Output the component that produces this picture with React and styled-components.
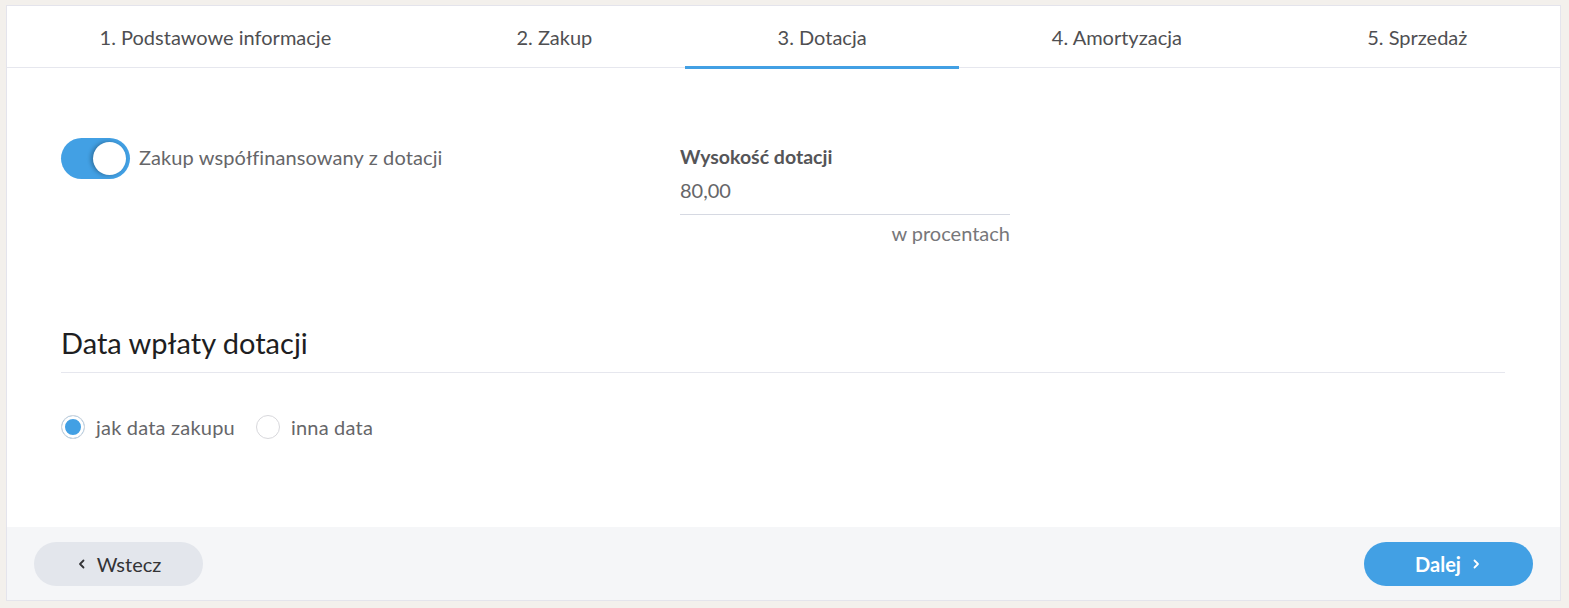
import React, { useState } from 'react';
import styled, { createGlobalStyle } from 'styled-components';

const GlobalStyle = createGlobalStyle`
    html, body {
        margin: 0;
        background: #f3f0ec;
    }
    body {
        padding: 5px 8px 7px 6px;
        font-family: Lato, "Open Sans", sans-serif;
    }
`;

const tabs = ['1. Podstawowe informacje', '2. Zakup', '3. Dotacja', '4. Amortyzacja', '5. Sprzedaż'];

function App() {
    const [active] = useState(2);
    const [financed, setFinanced] = useState(true);
    const [dateMode, setDateMode] = useState('purchase');

    return (
        <>
            <GlobalStyle />
            <Card>
                <Tabs>
                    {tabs.map((t, i) => (
                        <Tab key={t} active={i === active}>{t}</Tab>
                    ))}
                </Tabs>
                <Content>
                    <Row>
                        <ToggleField onClick={() => setFinanced(!financed)}>
                            <Switch on={financed}><Knob on={financed} /></Switch>
                            <ToggleLabel>Zakup współfinansowany z dotacji</ToggleLabel>
                        </ToggleField>
                        <Field>
                            <FieldLabel>Wysokość dotacji</FieldLabel>
                            <Input defaultValue="80,00" />
                            <Hint>w procentach</Hint>
                        </Field>
                    </Row>
                    <SectionTitle>Data wpłaty dotacji</SectionTitle>
                    <Radios>
                        <RadioOption onClick={() => setDateMode('purchase')}>
                            <RadioCircle checked={dateMode === 'purchase'} />
                            jak data zakupu
                        </RadioOption>
                        <RadioOption onClick={() => setDateMode('other')}>
                            <RadioCircle checked={dateMode === 'other'} />
                            inna data
                        </RadioOption>
                    </Radios>
                </Content>
                <Footer>
                    <BackButton>
                        <Chevron viewBox="0 0 12 12"><path d="M7.5 2.5 L4 6 L7.5 9.5" /></Chevron>
                        Wstecz
                    </BackButton>
                    <NextButton>
                        Dalej
                        <Chevron viewBox="0 0 12 12"><path d="M4.5 2.5 L8 6 L4.5 9.5" /></Chevron>
                    </NextButton>
                </Footer>
            </Card>
        </>
    );
}

export default App;

const Card = styled.div`
    background: #fff;
    border: 1px solid #e4e4ec;
    height: 596px;
    display: flex;
    flex-direction: column;
    box-sizing: border-box;
`;

const Tabs = styled.div`
    display: flex;
    border-bottom: 1px solid #e6e7ee;
    height: 61px;
    flex-shrink: 0;
`;

const Tab = styled.div`
    flex: 1 1 auto;
    display: flex;
    align-items: center;
    justify-content: center;
    font-size: 20px;
    color: #4f4f52;
    white-space: nowrap;
    position: relative;
    cursor: pointer;
    &::after {
        content: '';
        position: absolute;
        left: 0;
        right: 0;
        bottom: -2px;
        height: 3px;
        background: ${p => (p.active ? '#42a0e4' : 'transparent')};
    }
`;

const Content = styled.div`
    flex: 1;
    padding: 70px 55px 0 54px;
`;

const Row = styled.div`
    display: grid;
    grid-template-columns: 619px 330px;
`;

const ToggleField = styled.div`
    display: flex;
    align-items: flex-start;
    gap: 9px;
    cursor: pointer;
`;

const Switch = styled.div`
    width: 69px;
    height: 41px;
    border-radius: 21px;
    background: ${p => (p.on ? '#42a0e4' : '#d6d9e0')};
    position: relative;
    flex-shrink: 0;
`;

const Knob = styled.div`
    position: absolute;
    top: 4px;
    left: ${p => (p.on ? '32px' : '4px')};
    width: 33px;
    height: 33px;
    border-radius: 50%;
    background: #fff;
    box-shadow: -2px 0 4px rgba(0, 0, 0, 0.3);
`;

const ToggleLabel = styled.span`
    font-size: 20px;
    letter-spacing: 0.1px;
    color: #666669;
    margin-top: 7px;
`;

const Field = styled.div`
    display: flex;
    flex-direction: column;
`;

const FieldLabel = styled.label`
    font-size: 19.5px;
    font-weight: 700;
    color: #555558;
    margin-top: 7px;
`;

const Input = styled.input`
    border: none;
    border-bottom: 1px solid #d6d9e2;
    font-family: inherit;
    font-size: 20px;
    color: #666669;
    padding: 10px 0 12px;
    outline: none;
`;

const Hint = styled.div`
    text-align: right;
    font-size: 20px;
    color: #77777a;
    margin-top: 6px;
`;

const SectionTitle = styled.h2`
    margin: 80px 0 0;
    font-size: 29px;
    font-weight: 400;
    color: #1e1e22;
    padding-bottom: 12px;
    border-bottom: 1px solid #e6e7ee;
`;

const Radios = styled.div`
    display: flex;
    gap: 21px;
    margin-top: 42px;
`;

const RadioOption = styled.label`
    display: flex;
    align-items: center;
    gap: 11px;
    font-size: 20px;
    letter-spacing: 0.2px;
    color: #666669;
    cursor: pointer;
`;

const RadioCircle = styled.span`
    width: 24px;
    height: 24px;
    box-sizing: border-box;
    border-radius: 50%;
    border: 1px solid #d8d8dc;
    background: ${p => (p.checked ? '#42a0e4' : '#fff')};
    box-shadow: ${p => (p.checked ? 'inset 0 0 0 3px #fff' : 'none')};
`;

const Footer = styled.div`
    background: #f5f6f8;
    height: 73px;
    flex-shrink: 0;
    display: flex;
    align-items: center;
    justify-content: space-between;
    padding: 0 27px 0 27px;
`;

const Button = styled.button`
    width: 169px;
    height: 44px;
    border: none;
    border-radius: 22px;
    display: flex;
    align-items: center;
    justify-content: center;
    gap: 9px;
    font-family: inherit;
    font-size: 20px;
    cursor: pointer;
`;

const BackButton = styled(Button)`
    background: #e3e6ec;
    color: #333336;
`;

const NextButton = styled(Button)`
    background: #42a0e4;
    color: #fff;
    font-weight: 700;
`;

const Chevron = styled.svg`
    width: 12px;
    height: 12px;
    fill: none;
    stroke: currentColor;
    stroke-width: 1.8;
    stroke-linecap: round;
    stroke-linejoin: round;
`;
